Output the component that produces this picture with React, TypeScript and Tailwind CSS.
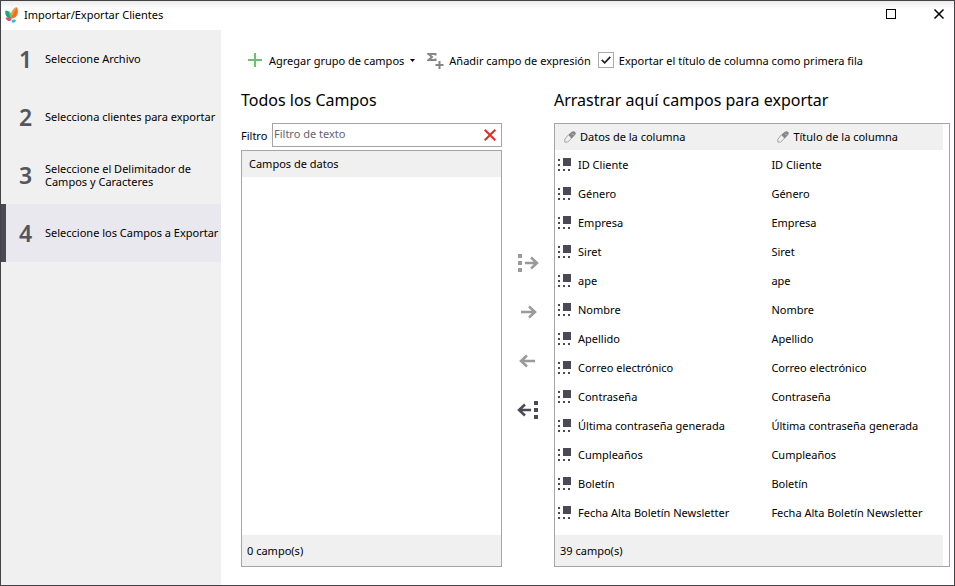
import React, { useState } from 'react'

const steps = [
    'Seleccione Archivo',
    'Selecciona clientes para exportar',
    'Seleccione el Delimitador de Campos y Caracteres',
    'Seleccione los Campos a Exportar',
]

const fields = [
    'ID Cliente',
    'Género',
    'Empresa',
    'Siret',
    'ape',
    'Nombre',
    'Apellido',
    'Correo electrónico',
    'Contraseña',
    'Última contraseña generada',
    'Cumpleaños',
    'Boletín',
    'Fecha Alta Boletín Newsletter',
]

const Logo = () => (
    <svg width="14" height="18" viewBox="0 0 14 18" aria-hidden="true">
        <path d="M11.500 2C7 4 5 8 6.500 13.500 12 13 14 8 11.500 2z" fill="#f79a3a" />
        <path d="M12 2C10 6 7.500 9 6.500 13.500 12 13 14 8 12 2z" fill="#ee6f2d" />
        <path d="M.5 5.500c4 0 6.500 3.500 6 8.500C2 13.500-.5 10.500.5 5.500z" fill="#1fa67a" />
        <path d="M4 6c2 2 3 4.500 2.500 8C5 12 3.500 9 4 6z" fill="#7cc04b" />
        <path d="M.5 13c2.500-1 4.500 0 6 1.500-1.500 2.500-4.500 2-6-1.500z" fill="#e8486b" />
        <path d="M7 15c1.500-1 3.500-.5 4 .5-.5 1.500-2 2.500-3.500 2-1-.5-1-1.700-.5-2.500z" fill="#35b5e5" />
    </svg>
)

const PlusIcon = () => (
    <svg width="14" height="14" viewBox="0 0 14 14" aria-hidden="true">
        <path d="M7 0v14M0 7h14" stroke="#6cc070" strokeWidth="2" />
    </svg>
)

const SigmaIcon = () => (
    <svg width="17" height="17" viewBox="0 0 17 17" fill="none" stroke="#85858b" aria-hidden="true">
        <path d="M8.500 3.500V2H1.500L5 5 1.500 8h7V6.500" strokeWidth="2" />
        <path d="M12.500 9v8M8.500 13h8" strokeWidth="2" />
    </svg>
)

const PencilIcon = () => (
    <svg width="12" height="12" viewBox="0 0 12 12" aria-hidden="true">
        <path d="M4 4 7.800.8q2.200-1.300 3.400.1t0 2.900L7.500 7.700z" fill="#85858b" />
        <path d="M4.300 4 .8 8.200v2.900h2.900l3.600-3.700" fill="#f0f0f0" stroke="#a4a4a8" />
        <path d="M8.300 2.800l1 1" stroke="#f0f0f0" strokeWidth="1" />
    </svg>
)

const FieldIcon = () => (
    <svg width="14" height="13" viewBox="0 0 14 13" fill="#4a4955" aria-hidden="true">
        <rect x="5" y="0" width="8" height="8" />
        <path d="M0 1h2v2H0zM0 6h2v2H0zM0 11h2v2H0zM5 11h2v2H5zM10 11h2v2h-2z" />
    </svg>
)

const arrows = [
    { label: 'Agregar todos', enabled: false, dots: 'M1 1h4v4H1zM1 8h4v4H1zM1 15h4v4H1z', line: 'M8 10h12M14 4.500l6 5.500-6 5.500' },
    { label: 'Agregar', enabled: false, dots: '', line: 'M4 10h14M12 4.500l6 5.500-6 5.500' },
    { label: 'Quitar', enabled: false, dots: '', line: 'M18 10H4M10 4.500L4 10l6 5.500' },
    { label: 'Quitar todos', enabled: true, dots: 'M17 1h4v4h-4zM17 8h4v4h-4zM17 15h4v4h-4z', line: 'M14 10H2M8 4.500L2 10l6 5.500' },
]

const App = () => {
    const [filter, setFilter] = useState('')
    const [withTitle, setWithTitle] = useState(true)
    const [active, setActive] = useState(3)

    return (
        <div className="flex min-h-screen flex-col border border-[#444246] bg-white font-['Noto_Sans',sans-serif] text-[11px] leading-[13px] text-black">
            <header className="flex h-[29px] items-center bg-linear-to-b from-[#ececec] to-white to-30% pb-[3px] pl-1">
                <Logo />
                <h1 className="ml-[5px] flex-1 text-[11px]">Importar/Exportar Clientes</h1>
                <button type="button" aria-label="Maximizar" className="flex w-12 justify-center">
                    <svg width="10" height="10" viewBox="0 0 10 10"><rect x=".5" y=".5" width="9" height="9" fill="none" stroke="#000" /></svg>
                </button>
                <button type="button" aria-label="Cerrar" className="mr-[-9px] flex w-12 justify-center">
                    <svg width="10" height="10" viewBox="0 0 10 10"><path d="M.5.5l9 9M9.500.5l-9 9" stroke="#000" strokeWidth="1.500" /></svg>
                </button>
            </header>

            <div className="flex flex-1">
                <nav className="w-[220px] shrink-0 bg-[#f0f0f0]">
                    <ol>
                        {steps.map((step, i) => (
                            <li key={step}>
                                <button
                                    type="button"
                                    onClick={() => setActive(i)}
                                    className={`flex h-[58px] w-full items-center border-l-[5px] text-left ${i === active ? 'border-[#4a4955] bg-[#e9e8ef]' : 'border-transparent'}`}
                                >
                                    <span className="w-[39px] shrink-0 text-center text-[23px] leading-[24px] font-semibold text-[#55555e]">{i + 1}</span>
                                    <span className="pb-px">{step}</span>
                                </button>
                            </li>
                        ))}
                    </ol>
                </nav>

                <main className="flex min-w-0 flex-1 flex-col pt-[18px] pr-1 pb-[18px] pl-5">
                    <div className="flex h-6 items-center whitespace-nowrap">
                        <button type="button" className="flex items-center pl-[7px]">
                            <PlusIcon />
                            <span className="ml-[7px]">Agregar grupo de campos</span>
                            <svg className="ml-1.5" width="5" height="3" viewBox="0 0 5 3"><path d="M0 0h5L2.500 3z" /></svg>
                        </button>
                        <button type="button" className="ml-3 flex items-center gap-[5px]">
                            <SigmaIcon />
                            Añadir campo de expresión
                        </button>
                        <label className="ml-[7px] flex items-center gap-[5px]">
                            <span className="relative flex">
                                <input
                                    type="checkbox"
                                    checked={withTitle}
                                    onChange={(e) => setWithTitle(e.target.checked)}
                                    className="h-4 w-4 appearance-none border border-[#a9a9ad] bg-white"
                                />
                                {withTitle && (
                                    <svg className="pointer-events-none absolute top-1 left-[3px]" width="10" height="8" viewBox="0 0 10 8">
                                        <path d="M.7 3.800L3.700 6.800 9.300.8" fill="none" stroke="#222" strokeWidth="1.700" />
                                    </svg>
                                )}
                            </span>
                            Exportar el título de columna como primera fila
                        </label>
                    </div>

                    <div className="mt-[17px] grid flex-1 grid-cols-[261fr_52px_396fr]">
                        <section className="flex flex-col">
                            <h2 className="h-[34px] text-[16px] leading-[22px]">Todos los Campos</h2>
                            <div className="mb-[3px] flex items-center">
                                <label htmlFor="filtro" className="w-[31px]">Filtro</label>
                                <div className="flex h-6 min-w-0 flex-1 items-center border border-[#a5a5a8] pr-[5px]">
                                    <input
                                        id="filtro"
                                        value={filter}
                                        onChange={(e) => setFilter(e.target.value)}
                                        placeholder="Filtro de texto"
                                        className="min-w-0 flex-1 pb-[3px] pl-px outline-none placeholder:text-[#66666c]"
                                    />
                                    <button type="button" aria-label="Borrar filtro" onClick={() => setFilter('')}>
                                        <svg width="12" height="12" viewBox="0 0 12 12"><path d="M.7.7l10.600 10.600M11.300.7L.7 11.300" stroke="#dc2f2b" strokeWidth="2" /></svg>
                                    </button>
                                </div>
                            </div>
                            <div className="flex flex-1 flex-col border border-[#a5a5a8]">
                                <h3 className="flex h-[26px] items-center bg-[#f0f0f0] pb-px pl-[7px]">Campos de datos</h3>
                                <div className="flex-1" />
                                <p className="flex h-[31px] items-center bg-[#f0f0f0] pl-[5px]">0 campo(s)</p>
                            </div>
                        </section>

                        <div className="flex flex-col items-center gap-[29px] pt-[164px]">
                            {arrows.map((arrow) => (
                                <button key={arrow.label} type="button" aria-label={arrow.label} disabled={!arrow.enabled} className="text-[#4a4955] disabled:text-[#9a9a9a]">
                                    <svg width="22" height="20" viewBox="0 0 22 20">
                                        <path d={arrow.dots} fill="currentColor" />
                                        <path d={arrow.line} fill="none" stroke="currentColor" strokeWidth="2.500" />
                                    </svg>
                                </button>
                            ))}
                        </div>

                        <section className="flex flex-col">
                            <h2 className="h-[34px] text-[16px] leading-[22px]">Arrastrar aquí campos para exportar</h2>
                            <div className="flex flex-1 flex-col border border-[#a5a5a8] pr-1.5">
                                <table className="w-full table-fixed text-left">
                                    <thead>
                                        <tr className="h-[26px] bg-[#f0f0f0]">
                                            <th className="w-[55%] pb-px pl-[9px] font-normal">
                                                <span className="flex items-center gap-1"><PencilIcon />Datos de la columna</span>
                                            </th>
                                            <th className="pb-px pl-[9px] font-normal">
                                                <span className="flex items-center gap-1"><PencilIcon />Título de la columna</span>
                                            </th>
                                        </tr>
                                    </thead>
                                    <tbody>
                                        {fields.map((field) => (
                                            <tr key={field} className="h-[29px]">
                                                <td className="pl-[3px]">
                                                    <span className="flex items-center gap-1.5"><FieldIcon />{field}</span>
                                                </td>
                                                <td className="pl-[3px]">{field}</td>
                                            </tr>
                                        ))}
                                    </tbody>
                                </table>
                                <p className="mt-auto flex h-[31px] items-center bg-[#f0f0f0] pl-[5px]">39 campo(s)</p>
                            </div>
                        </section>
                    </div>
                </main>
            </div>
        </div>
    )
}

export default App
